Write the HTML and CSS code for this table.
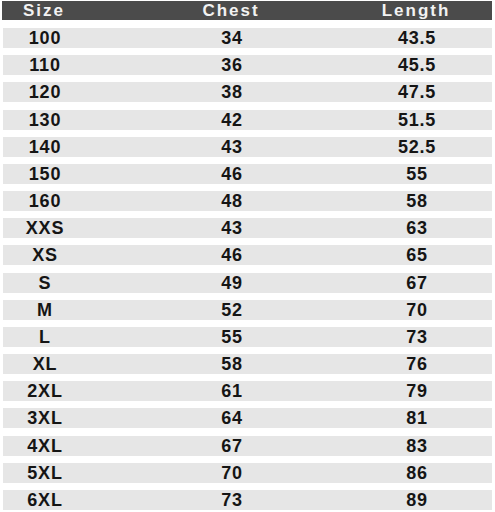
FILE: index.html
```
<!DOCTYPE html>
<html>
<head>
<meta charset="utf-8">
<link rel="stylesheet" href="styles.css">
</head>
<body>
<div class="chart">
  <div class="row head"><span>Size</span><span>Chest</span><span>Length</span></div>
  <div class="rows">
    <div class="row"><span>100</span><span>34</span><span>43.5</span></div>
    <div class="row"><span>110</span><span>36</span><span>45.5</span></div>
    <div class="row"><span>120</span><span>38</span><span>47.5</span></div>
    <div class="row"><span>130</span><span>42</span><span>51.5</span></div>
    <div class="row"><span>140</span><span>43</span><span>52.5</span></div>
    <div class="row"><span>150</span><span>46</span><span>55</span></div>
    <div class="row"><span>160</span><span>48</span><span>58</span></div>
    <div class="row"><span>XXS</span><span>43</span><span>63</span></div>
    <div class="row"><span>XS</span><span>46</span><span>65</span></div>
    <div class="row"><span>S</span><span>49</span><span>67</span></div>
    <div class="row"><span>M</span><span>52</span><span>70</span></div>
    <div class="row"><span>L</span><span>55</span><span>73</span></div>
    <div class="row"><span>XL</span><span>58</span><span>76</span></div>
    <div class="row"><span>2XL</span><span>61</span><span>79</span></div>
    <div class="row"><span>3XL</span><span>64</span><span>81</span></div>
    <div class="row"><span>4XL</span><span>67</span><span>83</span></div>
    <div class="row"><span>5XL</span><span>70</span><span>86</span></div>
    <div class="row"><span>6XL</span><span>73</span><span>89</span></div>
  </div>
</div>
</body>
</html>
```
FILE: styles.css
```
html, body {
  margin: 0;
  padding: 0;
  background: #ffffff;
}
.chart {
  width: 495px;
  padding: 1px 3px 0 3px;
  box-sizing: border-box;
  font-family: "Liberation Sans", Arial, sans-serif;
  font-weight: bold;
}
.row {
  display: grid;
  grid-template-columns: 84px 290px 80px 1fr;
  align-items: center;
  justify-items: center;
  height: 20px;
  background: #e6e6e6;
  color: #151515;
  font-size: 18px;
  letter-spacing: 0.8px;
  line-height: 20px;
}
.head {
  background: #4b4b4b;
  color: #f2f2f2;
  font-size: 17px;
  letter-spacing: 2px;
  height: 19px;
  line-height: 19px;
  margin-left: -1px;
}
.rows {
  display: flex;
  flex-direction: column;
  gap: 7.18px;
  margin-top: 8px;
}
```
